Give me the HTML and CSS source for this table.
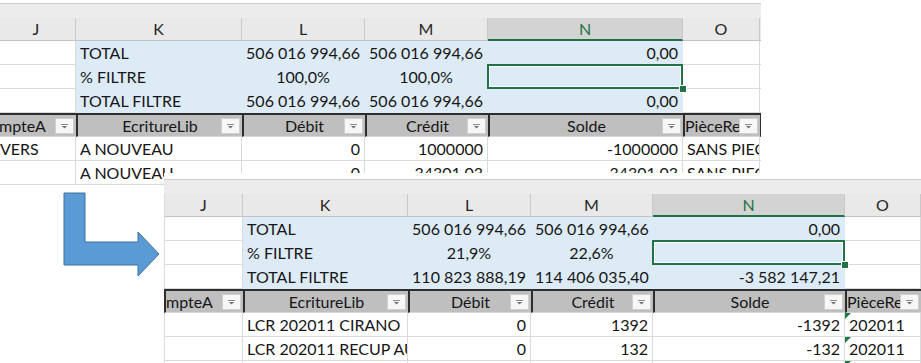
FILE: index.html
```html
<!DOCTYPE html>
<html lang="fr">
<head>
    <meta charset="UTF-8">
    <title>Filtre - avant / après</title>
    <link rel="stylesheet" href="styles.css">
</head>
<body>

<div class="stage">

    <!-- Feuille avant filtre -->
    <div class="sheet sheet-before">
        <div class="band"></div>
        <div class="grid grid-before">
            <div class="col-head">J</div>
            <div class="col-head">K</div>
            <div class="col-head">L</div>
            <div class="col-head">M</div>
            <div class="col-head is-selected">N</div>
            <div class="col-head">O</div>
            <div class="col-head"></div>

            <div class="cell"></div>
            <div class="cell fill">TOTAL</div>
            <div class="cell fill num">506 016 994,66</div>
            <div class="cell fill num">506 016 994,66</div>
            <div class="cell fill num">0,00</div>
            <div class="cell"></div>
            <div class="cell"></div>

            <div class="cell"></div>
            <div class="cell fill">% FILTRE</div>
            <div class="cell fill center">100,0%</div>
            <div class="cell fill center">100,0%</div>
            <div class="cell fill active"><span class="handle"></span></div>
            <div class="cell"></div>
            <div class="cell"></div>

            <div class="cell"></div>
            <div class="cell fill">TOTAL FILTRE</div>
            <div class="cell fill num">506 016 994,66</div>
            <div class="cell fill num">506 016 994,66</div>
            <div class="cell fill num">0,00</div>
            <div class="cell"></div>
            <div class="cell"></div>

            <div class="th lead"><span class="label">mpteA</span><span class="filter"><svg width="7" height="5" viewBox="0 0 7 5"><path d="M0 0.5h7" stroke="#8a8a8a"/><path d="M1 2h5l-2.5 2.5z" fill="#6f6f6f"/></svg></span></div>
            <div class="th"><span class="label">EcritureLib</span><span class="filter"><svg width="7" height="5" viewBox="0 0 7 5"><path d="M0 0.5h7" stroke="#8a8a8a"/><path d="M1 2h5l-2.5 2.5z" fill="#6f6f6f"/></svg></span></div>
            <div class="th"><span class="label">Débit</span><span class="filter"><svg width="7" height="5" viewBox="0 0 7 5"><path d="M0 0.5h7" stroke="#8a8a8a"/><path d="M1 2h5l-2.5 2.5z" fill="#6f6f6f"/></svg></span></div>
            <div class="th"><span class="label">Crédit</span><span class="filter"><svg width="7" height="5" viewBox="0 0 7 5"><path d="M0 0.5h7" stroke="#8a8a8a"/><path d="M1 2h5l-2.5 2.5z" fill="#6f6f6f"/></svg></span></div>
            <div class="th"><span class="label">Solde</span><span class="filter"><svg width="7" height="5" viewBox="0 0 7 5"><path d="M0 0.5h7" stroke="#8a8a8a"/><path d="M1 2h5l-2.5 2.5z" fill="#6f6f6f"/></svg></span></div>
            <div class="th lead"><span class="label">PièceRef</span><span class="filter"><svg width="7" height="5" viewBox="0 0 7 5"><path d="M0 0.5h7" stroke="#8a8a8a"/><path d="M1 2h5l-2.5 2.5z" fill="#6f6f6f"/></svg></span></div>
            <div class="th"></div>

            <div class="cell lead">VERS</div>
            <div class="cell">A NOUVEAU</div>
            <div class="cell num">0</div>
            <div class="cell num">1000000</div>
            <div class="cell num">-1000000</div>
            <div class="cell">SANS PIECE</div>
            <div class="cell"></div>

            <div class="cell"></div>
            <div class="cell">A NOUVEAU</div>
            <div class="cell num">0</div>
            <div class="cell num">34301,03</div>
            <div class="cell num">-34301,03</div>
            <div class="cell">SANS PIECE</div>
            <div class="cell"></div>
        </div>
    </div>

    <!-- Flèche -->
    <svg class="arrow" width="104" height="90" viewBox="0 0 104 90">
        <polygon points="4,3 25,3 25,52 78,52 78,42 99,64 78,86 78,75 4,75" fill="#5b9bd5" stroke="#41719c" stroke-width="1"/>
    </svg>

    <!-- Feuille après filtre -->
    <div class="sheet sheet-after">
        <div class="band"></div>
        <div class="grid grid-after">
            <div class="col-head">J</div>
            <div class="col-head">K</div>
            <div class="col-head">L</div>
            <div class="col-head">M</div>
            <div class="col-head is-selected">N</div>
            <div class="col-head">O</div>
            <div class="col-head"></div>

            <div class="cell"></div>
            <div class="cell fill">TOTAL</div>
            <div class="cell fill num">506 016 994,66</div>
            <div class="cell fill num">506 016 994,66</div>
            <div class="cell fill num">0,00</div>
            <div class="cell"></div>
            <div class="cell"></div>

            <div class="cell"></div>
            <div class="cell fill">% FILTRE</div>
            <div class="cell fill center">21,9%</div>
            <div class="cell fill center">22,6%</div>
            <div class="cell fill active"><span class="handle"></span></div>
            <div class="cell"></div>
            <div class="cell"></div>

            <div class="cell"></div>
            <div class="cell fill">TOTAL FILTRE</div>
            <div class="cell fill num">110 823 888,19</div>
            <div class="cell fill num">114 406 035,40</div>
            <div class="cell fill num">-3 582 147,21</div>
            <div class="cell"></div>
            <div class="cell"></div>

            <div class="th lead"><span class="label">mpteA</span><span class="filter"><svg width="7" height="5" viewBox="0 0 7 5"><path d="M0 0.5h7" stroke="#8a8a8a"/><path d="M1 2h5l-2.5 2.5z" fill="#6f6f6f"/></svg></span></div>
            <div class="th"><span class="label">EcritureLib</span><span class="filter"><svg width="7" height="5" viewBox="0 0 7 5"><path d="M0 0.5h7" stroke="#8a8a8a"/><path d="M1 2h5l-2.5 2.5z" fill="#6f6f6f"/></svg></span></div>
            <div class="th"><span class="label">Débit</span><span class="filter"><svg width="7" height="5" viewBox="0 0 7 5"><path d="M0 0.5h7" stroke="#8a8a8a"/><path d="M1 2h5l-2.5 2.5z" fill="#6f6f6f"/></svg></span></div>
            <div class="th"><span class="label">Crédit</span><span class="filter"><svg width="7" height="5" viewBox="0 0 7 5"><path d="M0 0.5h7" stroke="#8a8a8a"/><path d="M1 2h5l-2.5 2.5z" fill="#6f6f6f"/></svg></span></div>
            <div class="th"><span class="label">Solde</span><span class="filter"><svg width="7" height="5" viewBox="0 0 7 5"><path d="M0 0.5h7" stroke="#8a8a8a"/><path d="M1 2h5l-2.5 2.5z" fill="#6f6f6f"/></svg></span></div>
            <div class="th lead"><span class="label">PièceRef</span><span class="filter"><svg width="7" height="5" viewBox="0 0 7 5"><path d="M0 0.5h7" stroke="#8a8a8a"/><path d="M1 2h5l-2.5 2.5z" fill="#6f6f6f"/></svg></span></div>
            <div class="th"></div>

            <div class="cell"></div>
            <div class="cell">LCR 202011 CIRANO</div>
            <div class="cell num">0</div>
            <div class="cell num">1392</div>
            <div class="cell num">-1392</div>
            <div class="cell flag">202011</div>
            <div class="cell"></div>

            <div class="cell"></div>
            <div class="cell">LCR 202011 RECUP AUX</div>
            <div class="cell num">0</div>
            <div class="cell num">132</div>
            <div class="cell num">-132</div>
            <div class="cell flag">202011</div>
            <div class="cell"></div>

            <div class="cell"></div>
            <div class="cell"></div>
            <div class="cell"></div>
            <div class="cell"></div>
            <div class="cell"></div>
            <div class="cell flag"></div>
            <div class="cell"></div>
        </div>
    </div>

</div>

</body>
</html>
```

FILE: styles.css
```css
* {
    box-sizing: border-box;
}

body {
    margin: 0;
    background-color: #fff;
    font-family: Lato, "Liberation Sans", sans-serif;
    font-size: 16px;
    color: #161616;
}

.stage {
    position: relative;
    width: 921px;
    height: 363px;
    overflow: hidden;
}

/* Feuilles Excel */
.sheet {
    overflow: hidden;
    background-color: #fff;
}

.sheet-before {
    width: 761px;
    height: 186px;
    padding-top: 3px;
}

.sheet-after {
    position: absolute;
    left: 164px;
    top: 173px;
    width: 757px;
    height: 190px;
    padding-top: 6px;
}

.band {
    height: 15px;
    border-top: 1px solid #cdcdcd;
    background-color: #ececec;
}

.grid {
    display: grid;
    grid-template-rows: 23px;
    grid-auto-rows: 24px;
}

.grid-before {
    grid-template-columns: 79px 166px 123px 123px 195px 77px 40px;
    margin-left: -3px;
}

.grid-after {
    grid-template-columns: 79px 165px 123px 122px 192px 76px 40px;
}

/* Lettres de colonnes */
.col-head {
    background-color: #e9e9e9;
    border-right: 1px solid #c8c8c8;
    border-bottom: 1px solid #c4c4c4;
    text-align: center;
    line-height: 22px;
    color: #262626;
}

.col-head.is-selected {
    background-color: #d3d3d3;
    color: #217346;
    border-bottom: 2px solid #217346;
    line-height: 21px;
}

/* Cellules */
.cell {
    border-right: 1px solid #dadada;
    border-bottom: 1px solid #dadada;
    padding: 0 4px;
    line-height: 23px;
    white-space: nowrap;
    overflow: hidden;
}

.cell.lead {
    padding-left: 3px;
}

.grid-after .cell:nth-child(7n+1),
.grid-after .col-head:first-child {
    border-left: 1px solid #dadada;
}

.fill {
    background-color: #ddebf7;
    border-color: #ddebf7;
}

.num {
    text-align: right;
}

.center {
    text-align: center;
}

/* Cellule active avec poignée de recopie */
.active {
    position: relative;
    overflow: visible;
}

.active::after {
    content: "";
    position: absolute;
    left: -1px;
    top: -1px;
    right: -1px;
    bottom: -1px;
    border: 2px solid #217346;
    box-shadow: inset 0 0 0 1px #fff;
}

.handle {
    position: absolute;
    right: -5px;
    bottom: -5px;
    width: 8px;
    height: 8px;
    background-color: #217346;
    border: 1px solid #fff;
    z-index: 2;
}

/* Triangle vert : nombre stocké en texte */
.flag {
    position: relative;
}

.flag::before {
    content: "";
    position: absolute;
    left: 0;
    top: 0;
    border-top: 6px solid #1e7b45;
    border-right: 6px solid transparent;
}

/* En-têtes du tableau avec bouton de filtre */
.th {
    display: flex;
    background-color: #bfbfbf;
    border-top: 2px solid #2e2e2e;
    border-left: 2px solid #2e2e2e;
    border-bottom: 1px solid #d6d6d6;
    overflow: hidden;
}

.th .label {
    flex: 1;
    min-width: 0;
    padding-left: 21px;
    text-align: center;
    line-height: 21px;
    white-space: nowrap;
    overflow: hidden;
}

.th.lead .label {
    padding-left: 0;
    text-align: left;
}

.filter {
    flex: none;
    display: flex;
    align-items: center;
    justify-content: center;
    width: 19px;
    height: 16px;
    margin: auto 2px 2px 0;
    background-color: #f7f7f7;
    border: 1px solid #cfcfcf;
}

.arrow {
    position: absolute;
    left: 60px;
    top: 190px;
}
```
